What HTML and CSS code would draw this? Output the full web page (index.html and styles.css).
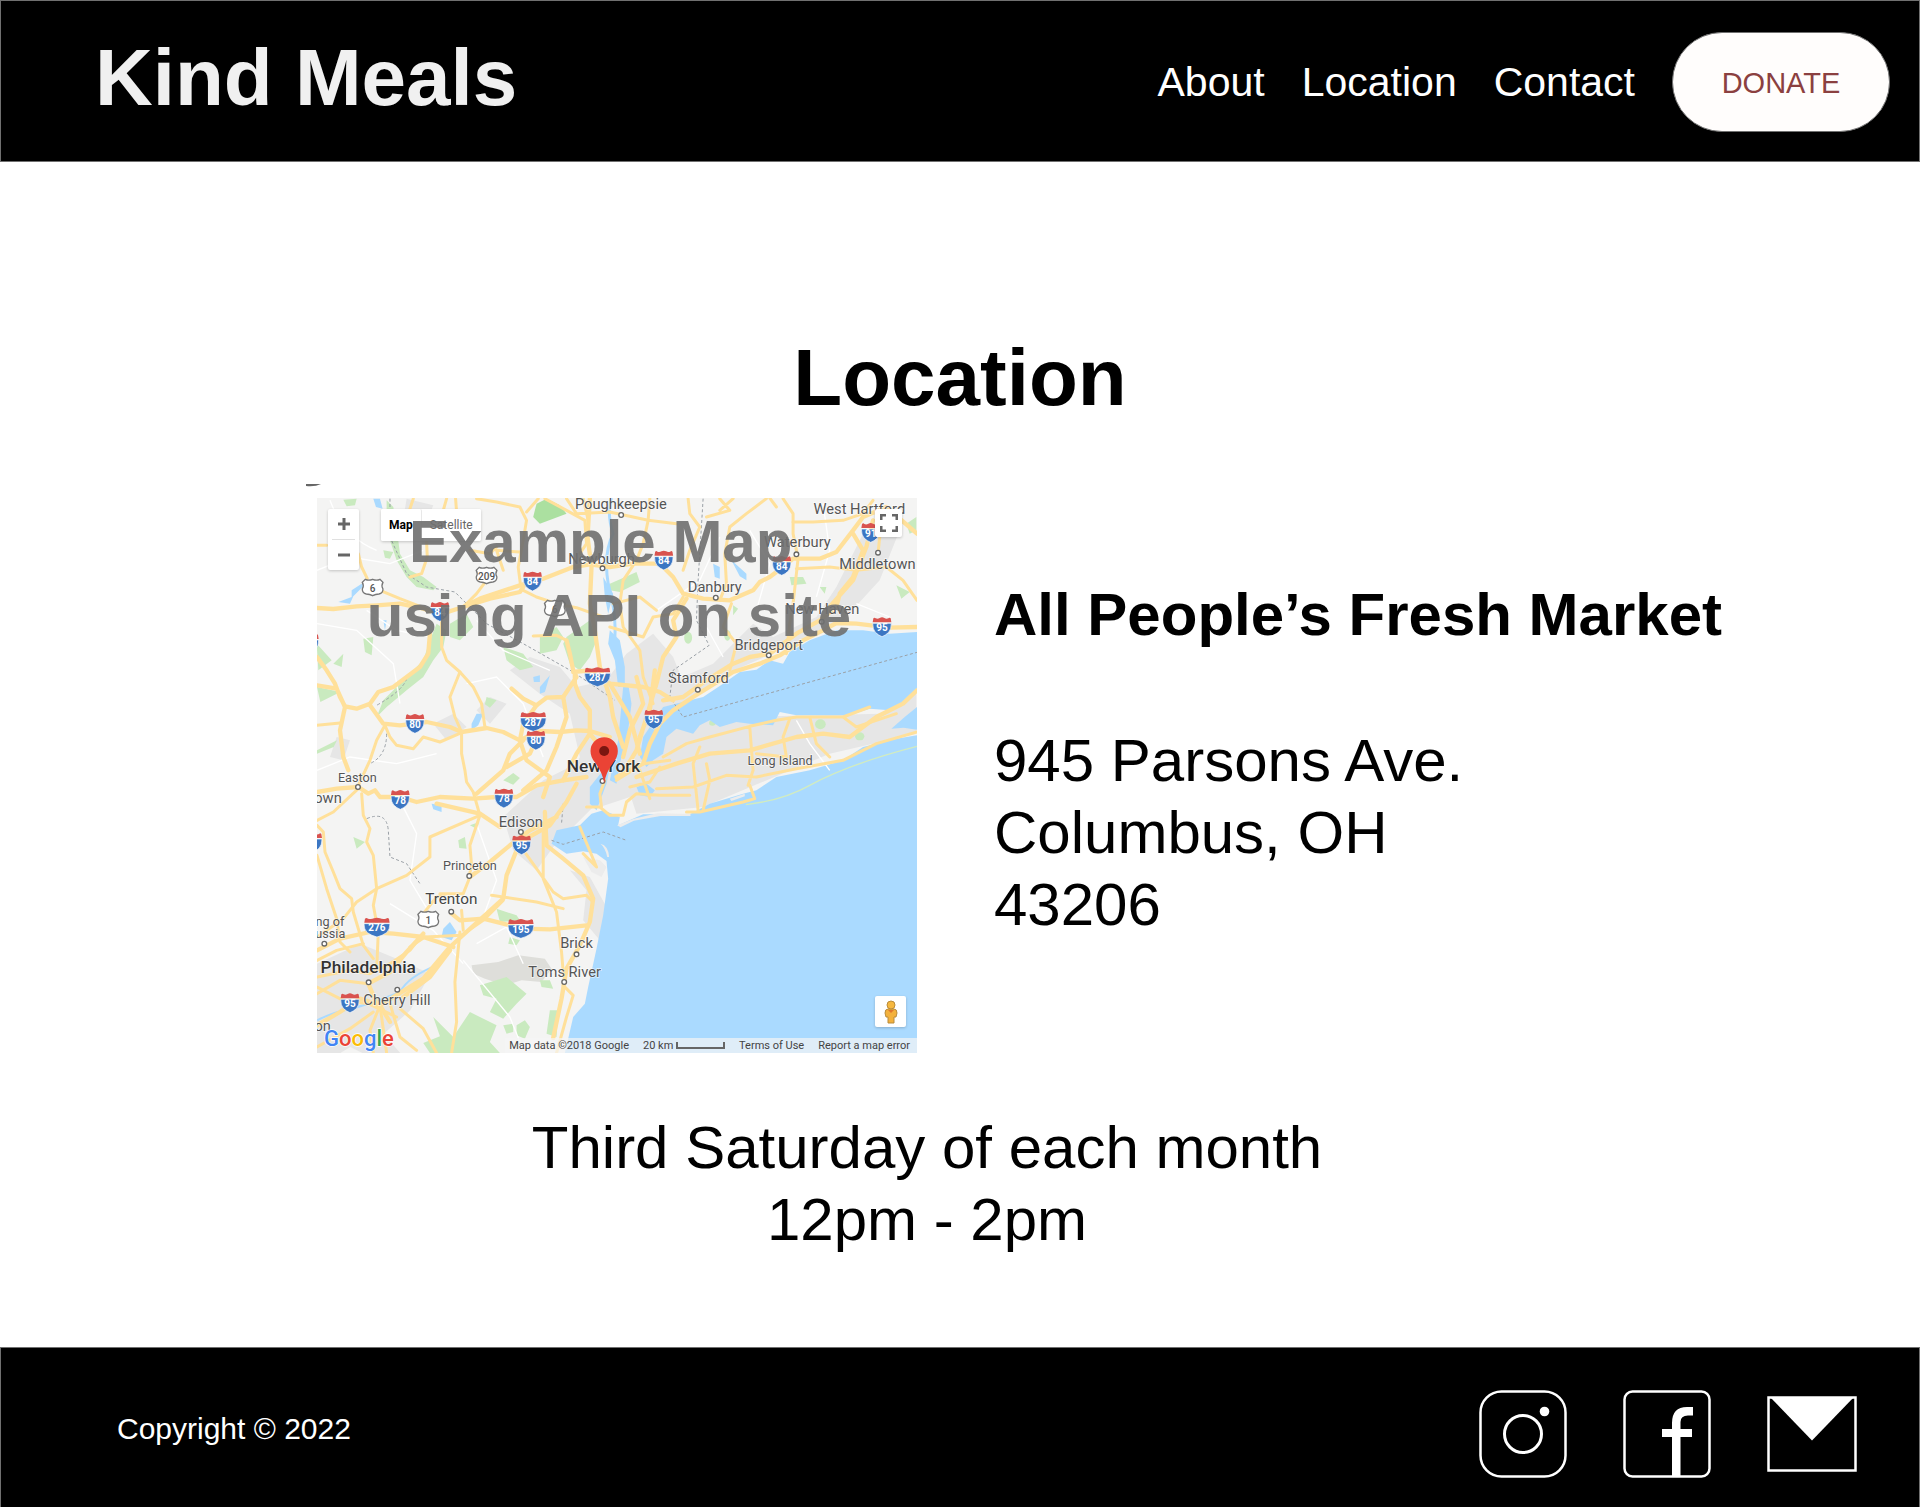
FILE: index.html
```html
<!DOCTYPE html>
<html lang="en">
<head>
<meta charset="utf-8">
<meta name="viewport" content="width=device-width, initial-scale=1">
<title>Kind Meals</title>
<link rel="stylesheet" href="styles.css">
</head>
<body>
<header class="site-header">
  <div class="brand">Kind Meals</div>
  <nav class="nav">
    <a href="#about">About</a>
    <a href="#location">Location</a>
    <a href="#contact">Contact</a>
    <button type="button" class="donate">DONATE</button>
  </nav>
</header>

<main class="main" id="location">
  <h1 class="title">Location</h1>
  <div class="place">
    <div class="map">
      <svg class="map-mark" viewBox="0 0 16 4" aria-hidden="true"><path d="M0 0H15Q9 3 0 2Z" fill="#666"/></svg>
      <svg class="map-art" viewBox="81 83 1801 1665" preserveAspectRatio="none" role="img" aria-label="Map of the New York area">
        <defs>
          <g id="i2"><path d="M-26-26q4-4 7 0q6 3 12-1q7-4 14 0q6 4 12 1q4-4 7 0l2 12h-56z" fill="#d9534f"/><path d="M-28-11h56q0 18-8 27q-9 9-20 13q-11-4-20-13q-8-9-8-27z" fill="#3b76c3" stroke="#fff" stroke-width="2"/></g>
          <g id="i3"><path d="M-36-26q5-4 9 0q10 3 18-1q9-4 18 0q8 4 18 1q5-4 9 0l2 12h-76z" fill="#d9534f"/><path d="M-39-11h78q0 18-10 27q-13 9-29 13q-16-4-29-13q-10-9-10-27z" fill="#3b76c3" stroke="#fff" stroke-width="2"/></g>
          <g id="us"><path d="M-22-24q10 5 22 0q12 5 22 0l9 9q-6 10 0 20q0 13-12 15q-10 0-19 5q-9-5-19-5q-12-2-12-15q6-10 0-20z" fill="#fff" stroke="#777" stroke-width="4"/></g>
          <circle id="town" r="7" fill="#fff" stroke="#666" stroke-width="4"/>
        </defs>
        <rect x="81" y="83" width="1801" height="1665" fill="#f4f4f3"/>
        <!-- built-up areas -->
        <g fill="#e6e6e6">
          <path d="M660 600l60-40 90 30 50 60 90-20 60-80 80-60 60 70 60 150-60 200-100 60-120 40-100-60 40-90-30-130-90-60z"/>
          <path d="M1060 740l110-40 200 40 400-10 110-60v120l-260 60-380 160-200 20-60-180z"/>
          <path d="M640 1040l120-110 120-60 60 110-90 90-60 60-50 70-70-60z"/>
          <path d="M1130 640l140-60 120-120 60 40 130-60 60-90 80-160 60-40 50 30-60 150-110 120-190 90-160 70-120 90z"/>
          <path d="M81 1480l130-60 120 50 90 40-60 110-80 70 60 70-40 30-120-60-100 60z"/>
          <path d="M840 1200l60 20 50 90-20 100-50-60 10-90z"/>
          <path d="M350 85l80 20-20 50-70-10zM430 760l60-30 40 40-60 40zM140 800l40 10-20 60-40-10zM560 720l40-40 50 20-50 60z"/>
        </g>
        <path d="M545 1485l80-10 60-20 80 10 20 30-30 40-60-5-50 15-60-20-35-15z" fill="#dededa"/>
        <!-- parks and woodland -->
        <g fill="#c9eabf">
          <path d="M440 460l30 20-10 50-30 40-30 50-50 40-60 50-30 30 20-50 60-60 60-60 20-60z"/>
          <path d="M290 90l20 20 10 60 10 80 30 50 40 20 40 30-10 10-50-10-30-30-30-50-20-60-10-60z"/>
          <path d="M740 100l30-15 40 20 20 25-40 15-40 15-20-20z" fill="#abe0a0"/>
          <path d="M830 500l70-50 20 60-20 50-30 40-30-20-20-60zM480 460l50-30 20 40-40 40-30-10zM750 500l50-30 20 30-20 40-50 10zM640 530l60 20 30 40-40 10-40-30z"/>
          <path d="M220 505l30-5-5 55-20-10zM80 520l45 50-40 30zM130 580l30-30-5 40zM81 650l70 15-60 30zM81 840l60-30-10 20-50 20zM160 88l40-3-5 20-25 3zM280 240l30 5-10 20-15-3z"/>
          <path d="M960 340l80-35 10 30-60 30-30-5zM1500 320l40 0 10 20-45 5zM1850 160l30-20v40l-20 10zM1330 405l15 10-15 20zM1590 350l20 0-5 20zM1820 345l40 20-25 20z"/>
          <ellipse cx="1195" cy="502" rx="12" ry="18"/><ellipse cx="1313" cy="495" rx="10" ry="16"/><ellipse cx="1592" cy="762" rx="16" ry="15"/><ellipse cx="1710" cy="798" rx="14" ry="12"/><ellipse cx="1268" cy="758" rx="10" ry="8"/>
          <path d="M640 930l30-22 20 15-20 20zM505 1110l20-10 5 35-22-2zM540 1065l28-10-8 20zM190 1100l35 15-25 20zM590 680l30 10-20 22-15-10z"/>
          <path d="M430 1640l60 60 50-75 80 40-20 50 30 33h-210l-20-30 50-20zM570 1545l80-25 60 50-30 30-40 45-40-20 20-40-40-10zM620 1315l60 20 10 15-60 5zM660 1400l30 10-10 15-25-5zM780 1620l25 0-5 80-30-10zM640 1665l30-5 0 25-20 5zM680 1665l25-15 15 20-15 35-25-10zM750 1530l30 0 10 25-35-5z"/>
        </g>
        <!-- sea, sound and rivers -->
        <g fill="#aadaff">
          <path d="M825 1748L850 1640 885 1600 895 1550 920 1435 940 1335 955 1225 950 1172 920 1150 880 1143 830 1150 785 1120 800 1080 870 1065 905 1030 940 1020 990 1040 985 1065 1060 1032 1200 1032 1260 1000 1360 970 1400 960 1460 920 1560 900 1660 870 1720 830 1820 805 1882 795V1748z"/>
          <path d="M1060 800L1120 710 1200 690 1240 680 1300 640 1350 605 1400 598 1440 570 1480 580 1500 545 1560 510 1640 480 1720 480 1800 490 1882 485V655L1840 700 1800 720 1740 715 1680 735 1520 735 1470 725 1450 765 1380 760 1340 755 1290 770 1260 750 1230 765 1210 790 1160 775 1130 800 1120 850 1090 870 1070 890 1050 860z"/>
          <path d="M1805 775l40-35 37-30v68l-40-6zM1000 650l15-10 10 60-10 80-25 100-10 60-20-10 25-120z"/>
          <path d="M960 480l30 30 15 80 0 60-20 0-10-80-20-50zM940 320l30 50-15 60-10-50zM900 950l40-50 20-10-10 50-30 80-20-20zM180 400l-35-5 40-15 0-20 30-20 5 8-30 30z"/>
          <path d="M545 760l15-30 20 0-15 35-20 15zM730 620l20-5 0 20-18 0zM750 650l30-35-15 50-15 5zM425 1000l30 5 0 20-25-8zM460 1375l20-20 20 30-15 25-30-10zM250 85l20 0 8 30-20-5zM280 450l10 0-5 30z"/>
          <path d="M1270 280l20 10 0 35-15-5zM1325 270l45 40 0 20-20-12zM1040 950l30-10 25 20-15 20-30-5z"/>
        </g>
        <path d="M81 1650q50-25 100-35t150-50q20-45 120-85" fill="none" stroke="#aadaff" stroke-width="6"/>
        <path d="M965 83Q950 130 970 190Q940 250 955 340Q980 430 975 500" fill="none" stroke="#aadaff" stroke-width="9"/>
        <g fill="#ececec"><path d="M982 1065l50-20 70-16 100 2 0 6-90 0-80 14-40 20zM932 1120q24 6 26 40l-6 0q-4-26-20-40z"/><path d="M880 1160l50 10 20 20-15 30-30-15zM1320 985l45-15 0 8-40 14z"/></g>
        <!-- minor roads -->
        <g fill="none" stroke="#fff" stroke-width="4">
          <path d="M81 300L180 260 300 280 400 240M120 90Q160 200 260 240M230 420L320 480 420 500M81 460L200 480 310 580 330 700M560 450L640 540 780 600M530 640L620 620 700 700 760 860M81 900L180 860 320 880 440 850M330 990L380 1090 360 1230 420 1330M560 1060L620 1230 580 1340M300 1300L430 1380 520 1480M520 1470L660 1640 700 1740M560 1420L650 1370 700 1480M1100 420L1230 330 1290 200M1380 180L1440 280 1400 420M1600 100L1620 240 1580 380M1700 400L1800 440M1520 750L1560 820 1620 900M1250 470L1300 560"/>
        </g>
        <!-- county and state lines -->
        <g fill="none" stroke="#9aa0a6" stroke-width="3" stroke-dasharray="9 7">
          <path d="M300 85L300 200 350 310 410 350 495 365 590 460 700 520 850 605 975 690"/>
          <path d="M1240 85L1225 330 1220 450 1258 525 1150 600 1140 680 1180 740 1882 546"/>
          <path d="M230 1045Q290 1020 295 1080L300 1160 350 1180 390 1240M290 790Q290 860 235 882M350 625Q340 660 260 705M785 1110L820 1122 940 1085 1010 1110M820 1000L815 1060"/>
        </g>
        <!-- highways -->
        <g fill="none" stroke="#ffe09a" stroke-linejoin="round" stroke-linecap="round">
          <g stroke-width="9">
            <path d="M81 225L110 225M205 250L215 290 232 325M270 360L330 385 400 412M370 85L360 115M410 215L412 260 395 310 360 320M470 85L460 120M497 85L500 125M81 765L150 758"/>
            <path d="M455 440L455 530 470 570 510 605 480 680 495 740 515 785 515 850 525 900 530 935 550 965 570 1035 540 1125 545 1185 538 1215"/>
            <path d="M285 765L300 800 320 825 370 835 400 800 450 815 515 787M285 765L260 810 240 870 205 945M510 605L550 650 575 700 585 770"/>
            <path d="M520 410L560 370 590 330M740 380L700 360M740 380L800 400 860 412 940 440M620 230L600 250 540 240M730 497L800 495 830 510"/>
            <path d="M560 85L620 95 690 110 710 150 700 210 685 290 692 345M710 125L745 85M765 85L830 120 885 150 890 220 870 250M830 85L860 130 960 125 1075 150 1160 160M880 85L895 150M640 300L620 240 690 245"/>
            <path d="M1080 85L1075 150 1060 220 1040 270 1000 330 990 400 1000 470 1050 540 1060 620 1090 700M1195 85L1200 130 1230 170 1200 240 1180 300M1290 85L1320 120 1250 140M1330 85L1290 120"/>
            <path d="M1430 85L1370 130 1320 170 1305 250 1310 340 1290 390M1480 85L1510 130 1510 190 1525 265 1510 400 1500 460 1490 550M1180 380L1150 430 1090 440 1060 500 960 470"/>
            <path d="M1510 155L1570 155 1660 150 1720 130 1750 90M1520 295L1620 290 1700 300 1790 290 1840 330 1882 390M1800 115L1770 200 1765 250M1325 400L1300 470 1340 520 1320 600M1100 420L1050 380 970 400M1440 83L1460 110"/>
            <path d="M1120 860L1190 820 1260 800 1380 768 1460 750 1520 740 1660 740 1740 710M1100 955L1210 950 1310 915 1400 920 1520 895 1660 870 1760 820 1882 785M1380 770L1390 900 1375 945M1230 830L1210 880 1225 1020M1500 745L1480 800 1490 860 1400 850M1560 740L1580 820 1620 860M1250 880L1260 930 1240 1020M1660 740L1700 770 1820 730M1190 1025L1230 1025 1360 995 1395 985 1380 945"/>
            <path d="M960 1035L1000 1035 1010 995 1040 970 1110 975 1200 975M1020 950L1080 935 1110 890M1050 900L1080 985M980 930L1060 880 1140 870M890 1010L930 1010 960 1035M935 1010L930 970 945 930"/>
            <path d="M81 1050L130 1025 205 955M215 970L220 1035 240 1075 230 1115 250 1155 260 1255 250 1305 265 1385 260 1500M81 1065L100 1085 105 1145 130 1205 150 1255 185 1285 190 1325 220 1425 250 1465M81 1155L110 1255 140 1345 150 1415 180 1445"/>
            <path d="M420 1160L420 1100 570 1035M420 1160L350 1215 260 1255 200 1295 160 1345 81 1400M450 1270L520 1270 540 1220M400 1330L440 1280 470 1270"/>
            <path d="M690 1125L740 1195 790 1265 820 1285 890 1275 905 1290M760 1075L760 1225 800 1325 815 1445 820 1505M605 1275L740 1295 820 1315M510 1385L495 1535 500 1655 485 1748M640 1290L580 1350 515 1395 405 1400 360 1430M820 1545L850 1575 830 1640 800 1748M870 1070L920 1190 880 1150"/>
            <path d="M400 1390L360 1440 300 1480 240 1510 180 1500 81 1520M81 1570L150 1530 235 1540M81 1550L160 1590 235 1600 320 1640M81 1730L180 1675 250 1625M270 1605L240 1680 250 1748M270 1605L290 1748M330 1615L400 1675 440 1748M300 1600L330 1700 380 1740M81 1470L140 1440 220 1420M515 1320L520 1380"/>
          </g>
          <g stroke-width="13">
            <path d="M81 413L130 416 200 408 260 405 330 400 400 415 450 432 520 410 570 385 690 345 760 325 850 290 900 282 960 290 1030 280 1110 280 1150 320 1180 370 1240 385 1320 390 1390 360 1410 335 1440 320 1480 290 1510 265 1590 265 1640 245 1690 180 1720 140 1790 110 1882 190"/>
            <path d="M520 410L600 385 690 365 700 350M420 490L415 550 390 590 350 620 310 650 265 665 240 700 200 715 165 708 150 680 135 640 110 600 81 560M81 645L140 655 165 710 150 780 160 860 175 900"/>
            <path d="M240 705L280 760 330 765 410 755 480 770 515 785 590 773 640 785 690 810 750 782 810 785 860 780 900 782 960 800"/>
            <path d="M665 655L700 685 740 705 770 682 820 680 860 620 850 600 840 550 830 510M850 605L900 600 960 640 1060 650 1110 665 1150 690M855 610L855 640 870 680 900 720 900 790 940 840"/>
            <path d="M900 85L893 200 905 290 900 400 915 480 930 590 960 680 970 740 1000 830M700 810L660 850 640 900 560 970M750 782L720 850 650 890M690 810L710 870 780 920 760 980"/>
            <path d="M740 705L700 760 690 810M820 680L830 740 800 830 770 900 700 960M960 640L1020 740 1050 850M900 790L860 850 820 930"/>
            <path d="M1190 385L1150 450 1160 500 1120 560 1100 640 1070 740 1040 840 1010 890M1040 620L1060 700 1020 780 1000 860M1095 600L1080 720 1050 800"/>
            <path d="M1882 470L1800 472 1700 460 1640 458 1600 480 1540 510 1470 555 1410 580 1330 605 1290 630 1210 680 1150 720 1110 760 1080 820 1060 880 980 920M1640 410L1590 450 1520 490 1440 550 1380 560 1330 580 1250 630 1180 680 1120 690M1690 190L1720 240 1690 320 1650 370 1640 410M1750 150L1730 230 1690 330 1610 420"/>
            <path d="M1040 920L1160 880 1260 850 1380 840 1520 800 1600 790 1680 800 1760 740 1840 700 1882 660"/>
            <path d="M81 965L140 955 205 950 235 970 255 960 270 980 330 980 380 995 450 980 550 985 620 980 680 980 740 945 820 930 890 920"/>
            <path d="M765 1025L770 1125 820 1165 880 1215 910 1285 900 1355 870 1425 830 1495 815 1585 790 1703M485 1330L510 1350 580 1345 640 1360 700 1375 780 1377 890 1365"/>
            <path d="M270 1605L400 1525 480 1430 640 1285 650 1215 690 1115 780 1065 830 995 860 940M480 1440L420 1520 340 1580M540 1220L600 1175 660 1125 720 1080 800 1040"/>
            <path d="M81 1440L150 1405 240 1385 310 1390 400 1400 490 1430M81 1665L150 1625 210 1585 270 1605 300 1655M235 1540L300 1505 350 1445 400 1390M235 1540L260 1600M440 1000L570 1030 630 1070"/>
          </g>
        </g>
        <path d="M1368 1003Q1480 990 1560 945Q1680 880 1882 828" fill="none" stroke="#d2ecc0" stroke-width="4"/>
        <!-- route shields -->
        <g class="shield">
          <use href="#i2" x="728" y="333"/><text x="728" y="345">84</text>
          <use href="#i2" x="450" y="424"/><text x="450" y="436">84</text>
          <use href="#i3" x="923" y="620"/><text x="923" y="632">287</text>
          <use href="#i2" x="375" y="760"/><text x="375" y="772">80</text>
          <use href="#i3" x="730" y="754"/><text x="730" y="766">287</text>
          <use href="#i2" x="738" y="810"/><text x="738" y="822">80</text>
          <use href="#i2" x="1122" y="270"/><text x="1122" y="282">84</text>
          <use href="#i2" x="1476" y="286"/><text x="1476" y="298">84</text>
          <use href="#i2" x="1743" y="187"/><text x="1743" y="199">91</text>
          <use href="#i2" x="1777" y="470"/><text x="1777" y="482">95</text>
          <use href="#i2" x="1092" y="747"/><text x="1092" y="759">95</text>
          <use href="#i2" x="331" y="988"/><text x="331" y="1000">78</text>
          <use href="#i2" x="642" y="984"/><text x="642" y="996">78</text>
          <use href="#i2" x="695" y="1124"/><text x="695" y="1136">95</text>
          <use href="#i3" x="261" y="1371"/><text x="261" y="1383">276</text>
          <use href="#i3" x="693" y="1375"/><text x="693" y="1387">195</text>
          <use href="#i2" x="180" y="1598"/><text x="180" y="1610">95</text>
          <use href="#i2" x="68" y="1117"/><use href="#i2" x="58" y="520"/>
        </g>
        <g class="shield us">
          <use href="#us" x="248" y="351"/><text x="248" y="364">6</text>
          <use href="#us" x="590" y="315"/><text x="590" y="328">209</text>
          <use href="#us" x="795" y="414"/><text x="795" y="427">6</text>
          <use href="#us" x="415" y="1347"/><text x="415" y="1360">1</text>
        </g>
        <!-- places -->
        <use href="#town" x="938" y="294"/><use href="#town" x="994" y="134"/><use href="#town" x="1520" y="252"/><use href="#town" x="1765" y="247"/><use href="#town" x="1278" y="382"/><use href="#town" x="1596" y="454"/><use href="#town" x="1437" y="555"/><use href="#town" x="1224" y="658"/><use href="#town" x="204" y="950"/><use href="#town" x="693" y="1085"/><use href="#town" x="538" y="1217"/><use href="#town" x="484" y="1324"/><use href="#town" x="103" y="1420"/><use href="#town" x="860" y="1452"/><use href="#town" x="823" y="1535"/><use href="#town" x="322" y="1558"/><use href="#town" x="236" y="1536"/><use href="#town" x="938" y="932"/>
        <g class="place-name">
          <text x="993" y="116">Poughkeepsie</text>
          <text x="935" y="280">Newburgh</text>
          <text x="1709" y="131">West Hartford</text>
          <text x="1523" y="231">Waterbury</text>
          <text x="1763" y="295">Middletown</text>
          <text x="1275" y="365">Danbury</text>
          <text x="1598" y="431">New Haven</text>
          <text x="1437" y="539">Bridgeport</text>
          <text x="1226" y="639">Stamford</text>
          <text x="693" y="1069">Edison</text>
          <text x="321" y="1604">Cherry Hill</text>
          <text x="860" y="1434">Brick</text>
          <text x="824" y="1519">Toms River</text>
          <text x="484" y="1301" class="mid">Trenton</text>
          <text x="202" y="934" class="small">Easton</text>
          <text x="540" y="1199" class="small">Princeton</text>
          <text x="1471" y="883" class="small">Long Island</text>
          <text x="120" y="1366" class="small">ng of</text>
          <text x="121" y="1402" class="small">ussia</text>
          <text x="114" y="999">own</text>
          <text x="98" y="1682">on</text>
          <text x="941" y="906" class="city">New York</text>
          <text x="235" y="1509" class="city">Philadelphia</text>
        </g>
        <path d="M943 939Q938 906 915 876Q902 860 902 842A41 41 0 0 1 984 842Q984 860 971 876Q948 906 943 939z" fill="#ea4335"/>
        <circle cx="943" cy="842" r="15" fill="#7b1610"/>
        <text class="google" x="102" y="1726"><tspan fill="#4285f4">G</tspan><tspan fill="#ea4335">o</tspan><tspan fill="#fbbc05">o</tspan><tspan fill="#4285f4">g</tspan><tspan fill="#34a853">l</tspan><tspan fill="#ea4335">e</tspan></text>
      </svg>
      <div class="zoom-box">
        <button type="button" aria-label="Zoom in"><svg viewBox="0 0 12 12" width="12" height="12"><path d="M6 0V12M0 6H12" stroke="#666" stroke-width="3"/></svg></button>
        <button type="button" aria-label="Zoom out"><svg viewBox="0 0 12 12" width="12" height="12"><path d="M0 6H12" stroke="#666" stroke-width="3"/></svg></button>
      </div>
      <div class="type-box"><button type="button" class="on">Map</button><button type="button">Satellite</button></div>
      <button type="button" class="full" aria-label="Full screen"><svg viewBox="0 0 18 18" width="18" height="18"><path d="M1 6V1H6M12 1H17V6M17 12V17H12M6 17H1V12" fill="none" stroke="#666" stroke-width="3"/></svg></button>
      <button type="button" class="pegman" aria-label="Street view"><svg viewBox="0 0 14 24" width="14" height="24"><path d="M4 9Q1 9 1 13L2 17 4 17V23H10V17L12 17 13 13Q13 9 10 9z" fill="#f3b13c" stroke="#b98b3a"/><circle cx="7" cy="5" r="4" fill="#f6b83f" stroke="#b98b3a"/><path d="M4 10L7 13 10 10z" fill="#e0762d"/></svg></button>
      <div class="map-bar"><span>Map data ©2018 Google</span><span class="scale">20 km <i></i></span><a href="#terms">Terms of Use</a><a href="#report">Report a map error</a></div>
      <p class="map-note">Example Map&nbsp;<br>using API on site</p>
    </div>
    <div class="details">
      <h2>All People’s Fresh Market</h2>
      <address>945 Parsons Ave.<br>Columbus, OH<br>43206</address>
    </div>
  </div>
  <p class="hours">Third Saturday of each month<br>12pm - 2pm</p>
</main>

<footer class="site-footer" id="contact">
  <p>Copyright © 2022</p>
  <div class="social">
    <a href="#instagram" aria-label="Instagram"><svg viewBox="0 0 88 88" width="88" height="88" fill="none" stroke="#fff"><rect x="1.5" y="1.5" width="85" height="85" rx="21" stroke-width="2.5"/><circle cx="44" cy="44" r="18.5" stroke-width="3"/><circle cx="65.5" cy="21.5" r="4.8" fill="#fff" stroke="none"/></svg></a>
    <a href="#facebook" aria-label="Facebook"><svg viewBox="0 0 88 88" width="88" height="88"><rect x="1.5" y="1.5" width="85" height="85" rx="8" fill="none" stroke="#fff" stroke-width="2.5"/><path d="M49 87V47H39V39H49V33Q49 17 64 17H70V25.500H65Q57.500 25.500 57.500 32V39H69V47H57.500V87z" fill="#fff"/></svg></a>
    <a href="#mail" aria-label="Email"><svg viewBox="0 0 90 76" width="90" height="76"><rect x="1.5" y="1.5" width="87" height="73" fill="none" stroke="#fff" stroke-width="2.5"/><path d="M3 1H87L45 44.500z" fill="#fff"/></svg></a>
  </div>
</footer>
</body>
</html>
```
FILE: styles.css
```css
* {
  box-sizing: border-box;
}

body {
  margin: 0;
  background: #fff;
  color: #000;
  font-family: "Liberation Sans", Arial, Helvetica, sans-serif;
}

h1, h2, p {
  margin: 0;
}

a {
  color: inherit;
  text-decoration: none;
}

button {
  border: 0;
  padding: 0;
  background: #fff;
  cursor: pointer;
}

.site-header {
  display: flex;
  align-items: center;
  justify-content: space-between;
  min-height: 162px;
  padding: 2px 29px 0 94px;
  border: 1px solid #707070;
  background: #000;
}

.brand {
  margin-bottom: 8px;
  color: #f0f0f0;
  font-size: 80px;
  font-weight: 700;
  line-height: 96px;
}

.nav {
  display: flex;
  align-items: center;
  gap: 37px;
  color: #fff;
  font-size: 41px;
  line-height: 48px;
}

.donate {
  width: 218px;
  height: 100px;
  padding-top: 2px;
  border: 1px solid #707070;
  border-radius: 50px;
  background: #fffdfc;
  color: #8b4040;
  font-family: inherit;
  font-size: 29px;
  line-height: 36px;
}

.main {
  padding: 168px 0 91px;
}

.title {
  font-size: 80px;
  line-height: 96px;
  text-align: center;
}

.place {
  display: flex;
  gap: 77px;
  margin-top: 72px;
  padding-left: 317px;
}

.map {
  position: relative;
  flex: none;
  width: 600px;
  height: 555px;
}

.map-art {
  display: block;
  width: 100%;
  height: 100%;
}

.map-mark {
  position: absolute;
  top: -14px;
  left: -11px;
  width: 16px;
  height: 4px;
}

.map-art text {
  font-family: Roboto, sans-serif;
}

.shield text {
  fill: #fff;
  font-size: 30px;
  font-weight: 700;
  text-anchor: middle;
}

.shield.us text {
  fill: #555;
  font-weight: 500;
}

.place-name text {
  fill: #555;
  stroke: #fff;
  stroke-width: 4px;
  stroke-opacity: 0.7;
  paint-order: stroke;
  font-size: 44px;
  text-anchor: middle;
}

.place-name .small {
  font-size: 38px;
}

.place-name .mid {
  fill: #444;
  font-size: 46px;
}

.place-name .city {
  fill: #333;
  font-size: 52px;
  font-weight: 500;
}

.map-art .google {
  stroke: #fff;
  stroke-width: 4px;
  paint-order: stroke;
  font-size: 66px;
  font-weight: 500;
}

.zoom-box,
.type-box,
.full,
.pegman {
  position: absolute;
  display: flex;
  border-radius: 2px;
  background: #fff;
  box-shadow: 0 1px 3px rgba(0, 0, 0, 0.2);
}

.zoom-box {
  top: 11px;
  left: 11px;
  flex-direction: column;
  width: 31px;
  height: 61px;
  padding: 0 4px;
}

.zoom-box button {
  display: grid;
  flex: 1;
  place-items: center;
}

.zoom-box button + button {
  border-top: 1px solid #e0e0e0;
}

.type-box {
  top: 11px;
  left: 64px;
  height: 32px;
}

.type-box button {
  padding: 0 8px;
  border-radius: 2px;
  color: #666;
  font-family: Roboto, sans-serif;
  font-size: 12px;
}

.type-box .on {
  border-right: 1px solid #e8e8e8;
  color: #000;
  font-weight: 700;
}

.full,
.pegman {
  align-items: center;
  justify-content: center;
}

.full {
  top: 11px;
  right: 15px;
  width: 27px;
  height: 28px;
}

.pegman {
  right: 11px;
  bottom: 26px;
  width: 31px;
  height: 31px;
}

.map-bar {
  position: absolute;
  right: 0;
  bottom: 0;
  display: flex;
  gap: 14px;
  height: 15px;
  padding: 0 7px 0 4px;
  background: rgba(245, 245, 245, 0.7);
  color: #444;
  font-family: Roboto, sans-serif;
  font-size: 11px;
  line-height: 15px;
  white-space: nowrap;
}

.scale i {
  display: inline-block;
  width: 49px;
  height: 7px;
  border: 2px solid #666;
  border-top: 0;
}

.map-note {
  position: absolute;
  top: 7px;
  right: 0;
  left: 0;
  padding-right: 16px;
  color: #707070;
  font-size: 60px;
  font-weight: 700;
  line-height: 74px;
  text-align: center;
  opacity: 0.9;
  pointer-events: none;
}

.details {
  padding-top: 81px;
}

.details h2,
.details address,
.hours {
  font-size: 60px;
  line-height: 72px;
}

.details address {
  margin-top: 74px;
  font-style: normal;
}

.hours {
  margin-top: 59px;
  padding-right: 66px;
  text-align: center;
}

.site-footer {
  display: flex;
  align-items: center;
  justify-content: space-between;
  padding: 42px 62px 29px 116px;
  border: 1px solid #707070;
  border-bottom: 0;
  background: #000;
  color: #fff;
}

.site-footer p {
  margin-bottom: 10px;
  font-size: 30px;
  line-height: 36px;
}

.social {
  display: flex;
  align-items: center;
  gap: 56px;
}

.social svg {
  display: block;
}
```
